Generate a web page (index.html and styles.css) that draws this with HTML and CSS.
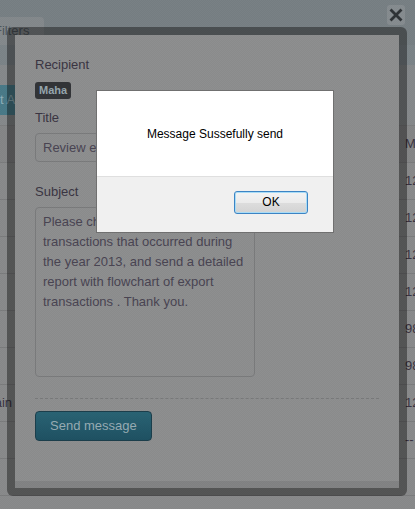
FILE: index.html
```html
<!DOCTYPE html>
<html>
<head>
<meta charset="utf-8">
<link rel="stylesheet" href="styles.css">
</head>
<body>
<div class="page">
  <div class="topbar">
    <div class="tabs"><span class="tab">Filters</span></div>
    <div class="subbar"></div>
  </div>
  <div class="toolbar"><span class="btn-teal">Export All</span></div>
  <div class="table">
    <div class="row head"><div class="c-left"></div><div class="c-mid"></div><div class="c-right">M</div></div>
    <div class="row"><div class="c-left"></div><div class="c-mid"></div><div class="c-right">12</div></div>
    <div class="row"><div class="c-left"></div><div class="c-mid"></div><div class="c-right">12</div></div>
    <div class="row"><div class="c-left"></div><div class="c-mid"></div><div class="c-right">12</div></div>
    <div class="row"><div class="c-left"></div><div class="c-mid"></div><div class="c-right">12</div></div>
    <div class="row"><div class="c-left"></div><div class="c-mid"></div><div class="c-right">98</div></div>
    <div class="row"><div class="c-left"></div><div class="c-mid"></div><div class="c-right">98</div></div>
    <div class="row"><div class="c-left">Domain</div><div class="c-mid"></div><div class="c-right">12</div></div>
    <div class="row"><div class="c-left"></div><div class="c-mid"></div><div class="c-right">--</div></div>
    <div class="row"><div class="c-left"></div><div class="c-mid"></div><div class="c-right"></div></div>
  </div>
</div>

<div class="close-btn">
  <svg width="18" height="20" viewBox="0 0 18 20"><path d="M4.5 5.5 L13.5 14.5 M13.5 5.5 L4.5 14.5" stroke="#2f3437" stroke-width="2.8" stroke-linecap="square" fill="none"/></svg>
</div>

<div class="modal">
  <div class="modal-body">
    <div class="lbl lbl-recip">Recipient</div>
    <div class="recips"><span class="badge">Maha</span></div>
    <div class="lbl lbl-title">Title</div>
    <div class="input">Review export transactions</div>
    <div class="lbl lbl-subj">Subject</div>
    <div class="textarea">Please check all the export<br>transactions that occurred during<br>the year 2013, and send a detailed<br>report with flowchart of export<br>transactions . Thank you.</div>
    <div class="dashed"></div>
    <div class="actions"><span class="btn-send">Send message</span></div>
  </div>
  <div class="modal-foot"></div>
</div>

<div class="dim"></div>

<div class="alert">
  <div class="alert-msg">Message Sussefully send</div>
  <div class="alert-foot"><span class="ok-btn">OK</span></div>
</div>
</body>
</html>
```
FILE: styles.css
```css
html, body {
  margin: 0;
  padding: 0;
}
body {
  width: 415px;
  height: 509px;
  overflow: hidden;
  position: relative;
  background: #8a8b8c;
  font-family: "Liberation Sans", Arial, sans-serif;
  font-size: 13px;
}

/* background page (already dimmed) */
.page {
  width: 415px;
}
.topbar {
  background: #798185;
}
.tabs {
  height: 45px;
  padding-top: 17px;
  box-sizing: border-box;
  display: flex;
}
.tab {
  display: block;
  margin-left: -21px;
  width: 65px;
  height: 28px;
  box-sizing: border-box;
  padding-left: 15px;
  line-height: 28px;
  font-size: 13px;
  background: #858a8d;
  color: #4f565c;
  border-radius: 4px 4px 0 0;
}
.subbar {
  height: 20px;
  background: #7d8589;
}
.toolbar {
  height: 60px;
  box-sizing: border-box;
  padding-top: 20px;
  background: #878a8c;
  display: flex;
}
.btn-teal {
  display: block;
  margin-left: -46px;
  height: 30px;
  line-height: 30px;
  padding: 0 12px;
  background: #4a7b89;
  color: #8fb0ba;
  font-size: 13px;
  border-radius: 4px;
}
.table {
  border-top: 1px solid #7e7f80;
}
.row {
  display: flex;
  height: 37px;
  box-sizing: border-box;
  border-bottom: 1px solid #7c7d7e;
  line-height: 36px;
  color: #3a3442;
}
.row.head {
  background: #868788;
}
.c-left {
  width: 12px;
  display: flex;
  justify-content: flex-end;
  white-space: nowrap;
}
.c-mid {
  flex: 1;
}
.c-right {
  width: 10px;
  white-space: nowrap;
}

/* close button */
.close-btn {
  position: absolute;
  left: 387px;
  top: 5px;
  width: 18px;
  height: 20px;
  background: #878d91;
  border-radius: 3px;
}
.close-btn svg {
  display: block;
}

/* modal */
.modal {
  position: absolute;
  left: 7px;
  top: 27px;
  width: 400px;
  height: 469px;
  box-sizing: border-box;
  border: 8px solid rgba(0, 0, 0, 0.38);
  border-radius: 6px;
  background: #8e8f90;
  background-clip: padding-box;
  display: flex;
  flex-direction: column;
}
.modal-body {
  flex: 1;
  padding: 20px 20px 0;
}
.modal-foot {
  height: 7px;
  background: #838485;
}
.lbl {
  line-height: 20px;
  color: #3b3643;
  font-size: 13px;
}
.lbl-recip {
  margin-bottom: 7px;
}
.recips {
  display: flex;
  margin-bottom: 9px;
}
.badge {
  display: block;
  padding: 2px 4px;
  line-height: 13px;
  font-size: 11px;
  font-weight: bold;
  background: #333538;
  color: #97a7ae;
  border-radius: 3px;
}
.lbl-title, .lbl-subj {
  margin-bottom: 5px;
}
.input {
  width: 220px;
  height: 29px;
  box-sizing: border-box;
  border: 1px solid #7b7c7d;
  border-radius: 4px;
  padding: 0 7px;
  line-height: 27px;
  color: #4a4553;
  white-space: nowrap;
  overflow: hidden;
  margin-bottom: 20px;
}
.textarea {
  width: 220px;
  height: 170px;
  box-sizing: border-box;
  border: 1px solid #7b7c7d;
  border-radius: 4px;
  padding: 4px 6px 4px 7px;
  line-height: 20px;
  color: #4a4553;
  white-space: nowrap;
  overflow: hidden;
}
.dashed {
  margin-top: 21px;
  border-top: 1px dashed #7a7b7c;
}
.actions {
  display: flex;
  margin-top: 12px;
}
.btn-send {
  display: block;
  height: 30px;
  box-sizing: border-box;
  line-height: 28px;
  padding: 0 14px;
  border: 1px solid #1c3f4c;
  border-radius: 4px;
  background: linear-gradient(#2a6475, #1f5263);
  color: #98adb5;
  font-size: 13px;
}

/* second overlay texture */
.dim {
  position: absolute;
  left: 0;
  top: 0;
  width: 415px;
  height: 509px;
  background: repeating-conic-gradient(rgba(0, 0, 0, 0.03) 0 25%, rgba(0, 0, 0, 0) 0 50%) 0 0 / 2px 2px;
}

/* alert */
.alert {
  position: absolute;
  left: 96px;
  top: 90px;
  width: 238px;
  height: 143px;
  box-sizing: border-box;
  border: 1px solid #707070;
  background: #fff;
  display: flex;
  flex-direction: column;
}
.alert-msg {
  height: 85px;
  display: flex;
  align-items: center;
  justify-content: center;
  font-size: 12px;
  color: #000;
}
.alert-foot {
  flex: 1;
  background: #f0f0f0;
  border-top: 1px solid #dfdfdf;
  display: flex;
  justify-content: flex-end;
  align-items: flex-start;
  padding: 14px 25px 0 0;
}
.ok-btn {
  display: block;
  width: 74px;
  height: 23px;
  box-sizing: border-box;
  border: 1px solid #3c84c4;
  border-radius: 3px;
  box-shadow: inset 0 0 0 1px #a9dcf6;
  background: linear-gradient(#f3f3f3 0%, #ebebeb 50%, #dddddd 51%, #d3d3d3 100%);
  text-align: center;
  line-height: 21px;
  font-size: 12px;
  color: #000;
}
```
